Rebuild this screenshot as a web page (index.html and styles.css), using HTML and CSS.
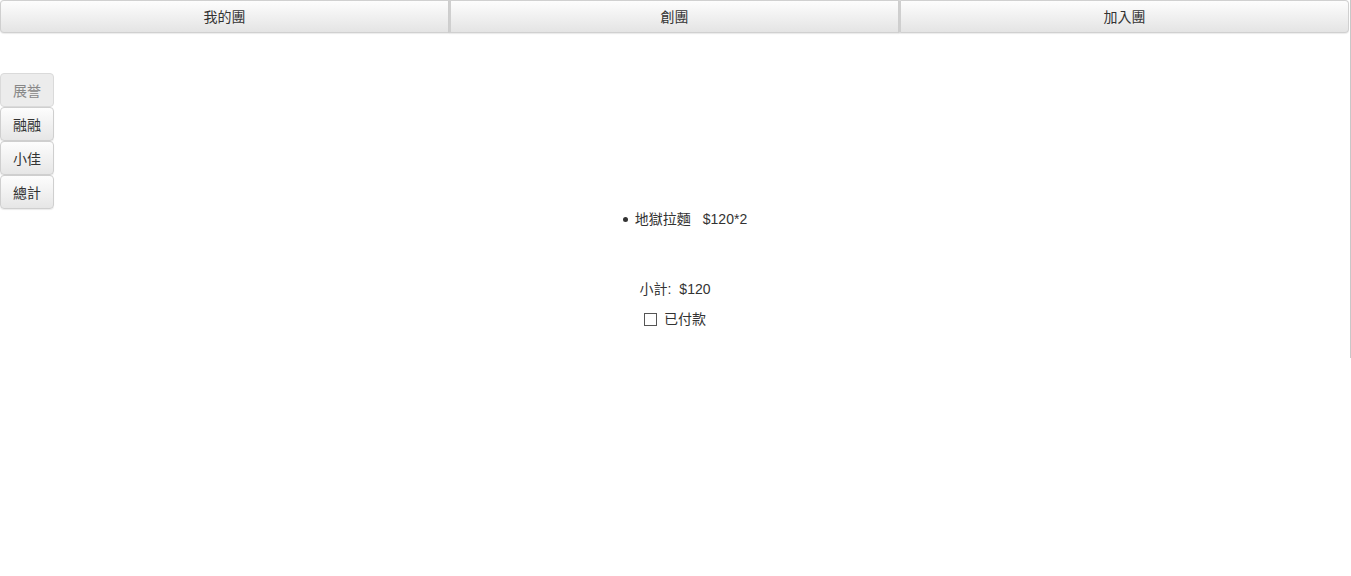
FILE: index.html
```html
<!DOCTYPE html>
<html lang="zh-Hant">
<head>
<meta charset="utf-8">
<link rel="stylesheet" href="styles.css">
</head>
<body>
<div class="page">
  <nav class="topnav">
    <button class="tab">我的團</button>
    <button class="tab">創團</button>
    <button class="tab">加入團</button>
  </nav>
  <div class="body">
    <div class="side">
      <button class="sbtn active">展誉</button>
      <button class="sbtn">融融</button>
      <button class="sbtn">小佳</button>
      <button class="sbtn">總計</button>
    </div>
    <div class="main">
      <ul class="items">
        <li>地獄拉麵<span class="price">$120*2</span></li>
      </ul>
      <div class="subtotal">小計:<span class="amt">$120</span></div>
      <label class="paid"><span class="box"></span>已付款</label>
    </div>
    <div></div>
  </div>
</div>
</body>
</html>
```
FILE: styles.css
```css
* { box-sizing: border-box; }
html, body { margin: 0; padding: 0; background: #fff; }
body {
  font-family: "Liberation Sans", "Noto Sans CJK TC", sans-serif;
  font-size: 14px;
  color: #333;
}
.page {
  width: 1351px;
  height: 358px;
  border-right: 1px solid #c8c8c8;
}
.topnav {
  display: flex;
  width: 1349px;
  height: 33px;
}
.tab {
  flex: 1;
  height: 33px;
  margin: 0;
  font: inherit;
  color: #333;
  background: linear-gradient(#fdfdfd, #e4e4e4);
  border: 1px solid #d0d0d0;
  border-left-width: 2px;
  border-left-color: #cfcfcf;
  border-radius: 0;
  box-shadow: 0 1px 1px rgba(0,0,0,0.08);
  padding: 0 0 1px;
}
.tab:first-child { border-left-width: 1px; border-radius: 4px 0 0 4px; }
.tab:last-child { border-radius: 0 4px 4px 0; }
.body {
  display: grid;
  grid-template-columns: 54px 1fr 54px;
}
.side {
  display: flex;
  flex-direction: column;
  padding-top: 40px;
}
.sbtn {
  width: 54px;
  height: 34px;
  margin: 0;
  padding: 0 0 1px;
  font: inherit;
  color: #333;
  background: linear-gradient(#fdfdfd, #e6e6e6);
  border: 1px solid #cfcfcf;
  border-radius: 4px;
  box-shadow: 0 1px 1px rgba(0,0,0,0.08);
}
.sbtn.active {
  background: #ececec;
  color: #888;
  border-color: #dadada;
  box-shadow: none;
}
.main {
  display: flex;
  flex-direction: column;
  align-items: center;
  padding-top: 176px;
}
.items {
  margin: 0;
  padding: 0 0 0 20px;
  list-style: none;
  line-height: 20px;
}
.items li {
  display: flex;
  align-items: center;
}
.items li::before {
  content: "";
  width: 5px;
  height: 5px;
  border-radius: 50%;
  background: #333;
  margin-right: 7px;
}
.price { margin-left: 12px; }
.subtotal {
  margin-top: 50px;
  line-height: 20px;
}
.amt { margin-left: 8px; }
.paid {
  display: flex;
  align-items: center;
  margin-top: 10px;
  line-height: 20px;
}
.box {
  width: 13px;
  height: 13px;
  border: 1px solid #555;
  margin-right: 7px;
  background: #fff;
}
```
